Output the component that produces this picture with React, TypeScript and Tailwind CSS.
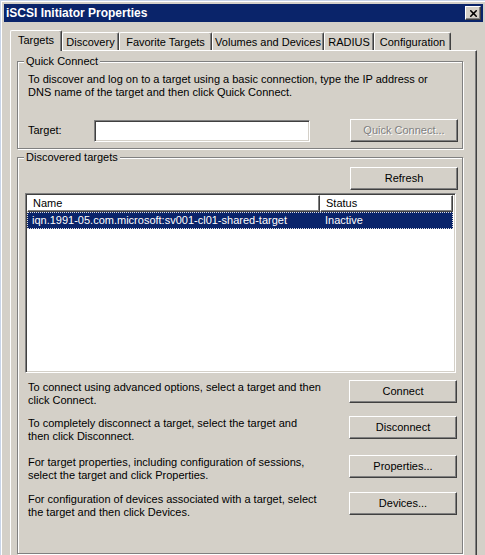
import { X } from "lucide-react";

const raised =
	"border border-t-white border-l-white border-r-[#404040] border-b-[#404040] shadow-[inset_-1px_-1px_0_#808080]";

const tabs = [
	{ label: "Targets", w: "w-[52px]" },
	{ label: "Discovery", w: "w-[57px]" },
	{ label: "Favorite Targets", w: "w-[93px]" },
	{ label: "Volumes and Devices", w: "w-[112px]" },
	{ label: "RADIUS", w: "w-[50px]" },
	{ label: "Configuration", w: "w-[77px]" },
];

function Button({ children, disabled }: { children: React.ReactNode; disabled?: boolean }) {
	return (
		<div
			className={`flex h-[23px] w-[108px] shrink-0 items-center justify-center ${raised} ${
				disabled ? "text-[#808080] [text-shadow:1px_1px_0_#fff]" : ""
			}`}
		>
			{children}
		</div>
	);
}

function GroupBox({ label, className, children }: { label: string; className: string; children: React.ReactNode }) {
	return (
		<div
			className={`relative border border-[#808080] shadow-[inset_1px_1px_0_#fff,1px_1px_0_#fff] ${className}`}
		>
			<span className="absolute -top-[7px] left-[6px] bg-[#d4d0c8] px-[2px] leading-[13px]">{label}</span>
			{children}
		</div>
	);
}

function ActionRow({ lines, button, className }: { lines: string[]; button: string; className: string }) {
	return (
		<div className={`flex h-[26px] items-start justify-between pl-[10px] pr-[5px] ${className}`}>
			<p className="pt-px">
				{lines[0]}
				<br />
				{lines[1]}
			</p>
			<Button>{button}</Button>
		</div>
	);
}

export default function App() {
	return (
		<div className="h-[555px] w-[485px] overflow-hidden bg-[#d4d0c8] font-['Liberation_Sans',Arial,sans-serif] text-[11px] leading-[13px] text-black">
			<div className="h-full border-l border-t border-[#c8d4e8]">
				<div className="h-full border-l border-t border-white pl-[2px] pr-[2px] pt-[2px]">
					{/* title bar */}
					<div className="flex h-[18px] items-center justify-between bg-[#0a246a] pl-[2px] pr-[2px]">
						<span className="text-[12px] font-bold text-white">iSCSI Initiator Properties</span>
						<div className={`flex h-[14px] w-[16px] shrink-0 items-center justify-center bg-[#d4d0c8] text-black ${raised}`}>
							<X size={11} strokeWidth={3.5} color="#000" className="shrink-0" />
						</div>
					</div>

					{/* tabs */}
					<div className="mt-[8px] flex h-[20px] items-end pl-[6px]">
						{tabs.map((t, i) =>
							i === 0 ? (
								<div
									key={t.label}
									className={`relative z-10 -mb-px flex h-[21px] ${t.w} items-center justify-center rounded-t-[2px] border-l border-r border-t border-l-white border-r-[#404040] border-t-white bg-[#d4d0c8] pb-[2px] shadow-[inset_-1px_0_0_#808080]`}
								>
									{t.label}
								</div>
							) : (
								<div
									key={t.label}
									className={`flex h-[18px] ${t.w} items-center justify-center rounded-t-[2px] border-l border-r border-t border-l-white border-r-[#404040] border-t-white pt-px shadow-[inset_-1px_0_0_#808080]`}
								>
									{t.label}
								</div>
							),
						)}
					</div>

					{/* tab page */}
					<div className={`ml-[6px] h-[600px] w-[467px] pl-[6px] pt-[10px] ${raised}`}>
						<GroupBox label="Quick Connect" className="h-[88px] w-[446px] pl-[10px] pt-[11px]">
							<p>
								To discover and log on to a target using a basic connection, type the IP address or
								<br />
								DNS name of the target and then click Quick Connect.
							</p>
							<div className="mt-[20px] flex items-center pr-[4px]">
								<span className="w-[66px]">Target:</span>
								<div className="h-[22px] w-[216px] border border-b-white border-l-[#808080] border-r-white border-t-[#808080] bg-white shadow-[inset_1px_1px_0_#404040,inset_-1px_-1px_0_#d4d0c8]" />
								<div className="ml-auto">
									<Button disabled>Quick Connect...</Button>
								</div>
							</div>
						</GroupBox>

						<GroupBox label="Discovered targets" className="mt-[8px] h-[397px] w-[446px] pt-[9px]">
							<div className="flex justify-end pr-[4px]">
								<Button>Refresh</Button>
							</div>
							<div className="ml-[7px] mt-[3px] h-[180px] w-[431px] border border-b-white border-l-[#808080] border-r-white border-t-[#808080] bg-white p-px shadow-[inset_1px_1px_0_#404040,inset_-1px_-1px_0_#d4d0c8]">
								<div className="flex h-[17px]">
									<div className={`flex w-[293px] items-center pl-[5px] ${raised}`}>Name</div>
									<div className={`flex w-[133px] items-center pl-[5px] ${raised}`}>Status</div>
								</div>
								<div className="flex h-[17px] w-[426px] items-center border border-dotted border-[#e0e0e0] bg-[#0a246a] text-white">
									<span className="w-[293px] pl-[4px]">iqn.1991-05.com.microsoft:sv001-cl01-shared-target</span>
									<span className="pl-[4px]">Inactive</span>
								</div>
							</div>

							<ActionRow
								className="mt-[7px]"
								lines={["To connect using advanced options, select a target and then", "click Connect."]}
								button="Connect"
							/>
							<ActionRow
								className="mt-[10px]"
								lines={["To completely disconnect a target, select the target and", "then click Disconnect."]}
								button="Disconnect"
							/>
							<ActionRow
								className="mt-[13px]"
								lines={["For target properties, including configuration of sessions,", "select the target and click Properties."]}
								button="Properties..."
							/>
							<ActionRow
								className="mt-[11px]"
								lines={["For configuration of devices associated with a target, select", "the target and then click Devices."]}
								button="Devices..."
							/>
						</GroupBox>
					</div>
				</div>
			</div>
		</div>
	);
}
